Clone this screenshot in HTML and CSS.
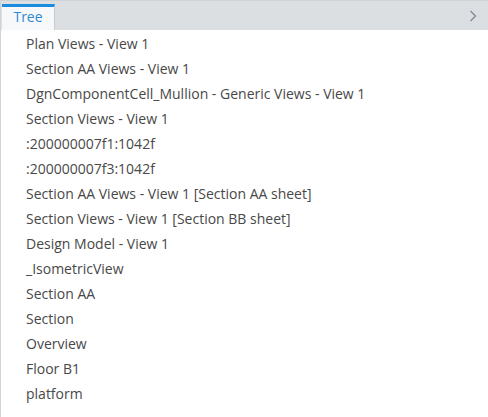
FILE: index.html
```html
<!DOCTYPE html>
<html>
<head>
<meta charset="utf-8">
<link rel="stylesheet" href="styles.css">
</head>
<body>
<div class="panel">
  <div class="tabbar">
    <div class="tab">Tree</div>
    <div class="spacer"></div>
    <div class="chev">
      <svg width="8" height="12" viewBox="0 0 8 12"><path d="M1.5 1 L6.5 6 L1.5 11" fill="none" stroke="#7d8a97" stroke-width="1.3"/></svg>
    </div>
  </div>
  <ul class="list">
    <li>Plan Views - View 1</li>
    <li>Section AA Views - View 1</li>
    <li>DgnComponentCell_Mullion - Generic Views - View 1</li>
    <li>Section Views - View 1</li>
    <li>:200000007f1:1042f</li>
    <li>:200000007f3:1042f</li>
    <li>Section AA Views - View 1 [Section AA sheet]</li>
    <li>Section Views - View 1 [Section BB sheet]</li>
    <li>Design Model - View 1</li>
    <li>_IsometricView</li>
    <li>Section AA</li>
    <li>Section</li>
    <li>Overview</li>
    <li>Floor B1</li>
    <li>platform</li>
  </ul>
</div>
</body>
</html>
```
FILE: styles.css
```css
html, body {
  margin: 0;
  padding: 0;
  background: #fff;
}
.panel {
  width: 488px;
  height: 417px;
  box-sizing: border-box;
  border-left: 1px solid #d0d4d8;
  font-family: "Open Sans", sans-serif;
  font-size: 14px;
  color: #484848;
}
.tabbar {
  display: flex;
  height: 30px;
  background: #dcdfe2;
  border-top: 1px solid #cfd3d7;
  box-sizing: border-box;
}
.tab {
  margin-left: 1px;
  width: 53px;
  background: #f7f8f9;
  border-top: 3px solid #1b8be0;
  margin-top: 3px;
  box-sizing: border-box;
  text-align: center;
  color: #2f8ad6;
  line-height: 20px;
  border-right: 1px solid #c9cdd1;
}
.spacer { flex: 1; }
.chev {
  width: 30px;
  display: flex;
  align-items: center;
  justify-content: center;
}
.list {
  list-style: none;
  margin: 0;
  padding: 1px 0 0 25px;
}
.list li {
  height: 25px;
  line-height: 25px;
  white-space: nowrap;
}
```
